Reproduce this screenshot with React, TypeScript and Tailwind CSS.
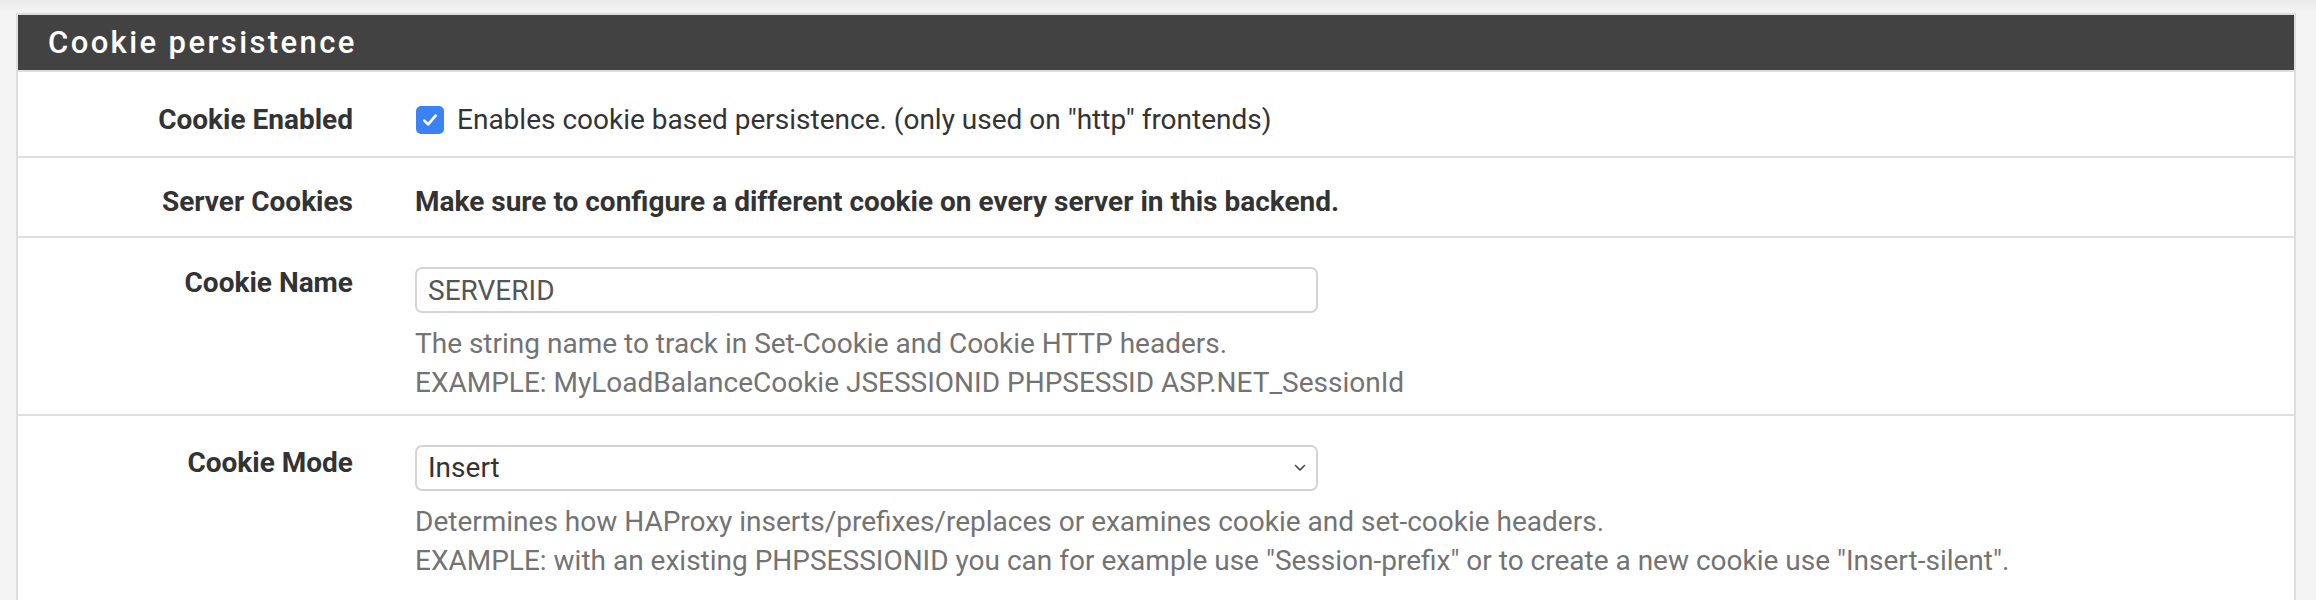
import React from "react";

function Check() {
  return (
    <span className="inline-flex h-[28px] w-[28px] shrink-0 items-center justify-center rounded-[5px] bg-[#3b82f7]">
      <svg viewBox="0 0 16 16" className="h-[20px] w-[20px]" fill="none">
        <path
          d="M3.5 8.5l3 3 6-7"
          stroke="white"
          strokeWidth="2.2"
          strokeLinecap="round"
          strokeLinejoin="round"
        />
      </svg>
    </span>
  );
}

function Label({ text, pad }: { text: string; pad: string }) {
  return (
    <div className={`w-[335px] shrink-0 text-right text-[28px] font-bold leading-[39px] text-[#333333] ${pad}`}>
      {text}
    </div>
  );
}

function Help({ lines }: { lines: string[] }) {
  return (
    <div className="mt-[11px] text-[28px] leading-[39px] text-[#737373]">
      {lines.map((l) => (
        <div key={l} className="whitespace-nowrap">
          {l}
        </div>
      ))}
    </div>
  );
}

export default function App() {
  return (
    <div
      className="min-h-screen bg-gradient-to-b from-[#ebebeb] to-[#f4f4f4] to-[13px] pl-[16px] pr-[20px] pt-[13px]"
      style={{ fontFamily: "Roboto, 'Liberation Sans', sans-serif" }}
    >
      <div className="border-2 border-b-0 border-[#dddddd] bg-white">
        {/* Header */}
        <div className="flex h-[55px] items-center bg-[#424242] pl-[30px] pt-[2px]">
          <h2 className="text-[31px] font-medium tracking-[2.4px] text-white">
            Cookie persistence
          </h2>
        </div>

        {/* Cookie Enabled */}
        <div className="flex border-t-2 border-[#dedede] pb-[17px] pt-[28px]">
          <Label text="Cookie Enabled" pad="" />
          <div className="flex h-[39px] items-center gap-[13px] pl-[63px] text-[28px] text-[#333333]">
            <Check />
            <span>Enables cookie based persistence. (only used on "http" frontends)</span>
          </div>
        </div>

        {/* Server Cookies */}
        <div className="flex border-t-2 border-[#dedede] pb-[15px] pt-[24px]">
          <Label text="Server Cookies" pad="" />
          <div className="pl-[62px] text-[28px] font-bold leading-[39px] text-[#333333]">
            Make sure to configure a different cookie on every server in this backend.
          </div>
        </div>

        {/* Cookie Name */}
        <div className="flex border-t-2 border-[#dedede] pb-[12px]">
          <Label text="Cookie Name" pad="pt-[25px]" />
          <div className="flex-1 pl-[62px] pt-[29px]">
            <input
              readOnly
              value="SERVERID"
              className="h-[46px] w-[903px] rounded-[7px] border-2 border-[#d4d4d4] bg-white px-[11px] text-[28px] text-[#555555] outline-none"
            />
            <Help
              lines={[
                "The string name to track in Set-Cookie and Cookie HTTP headers.",
                "EXAMPLE: MyLoadBalanceCookie JSESSIONID PHPSESSID ASP.NET_SessionId",
              ]}
            />
          </div>
        </div>

        {/* Cookie Mode */}
        <div className="flex border-t-2 border-[#dedede] pb-[20px]">
          <Label text="Cookie Mode" pad="pt-[27px]" />
          <div className="flex-1 pl-[62px] pt-[29px]">
            <div className="flex h-[46px] w-[903px] items-center justify-between rounded-[7px] border-2 border-[#d4d4d4] bg-white pl-[11px] pr-[10px] text-[28px] text-[#333333]">
              <span>Insert</span>
              <svg viewBox="0 0 12 8" className="h-[8px] w-[12px]" fill="none">
                <path d="M1.5 1.5l4.5 4.5 4.5-4.5" stroke="#444" strokeWidth="1.6" strokeLinecap="round" strokeLinejoin="round" />
              </svg>
            </div>
            <Help
              lines={[
                "Determines how HAProxy inserts/prefixes/replaces or examines cookie and set-cookie headers.",
                'EXAMPLE: with an existing PHPSESSIONID you can for example use "Session-prefix" or to create a new cookie use "Insert-silent".',
              ]}
            />
          </div>
        </div>
      </div>
    </div>
  );
}
